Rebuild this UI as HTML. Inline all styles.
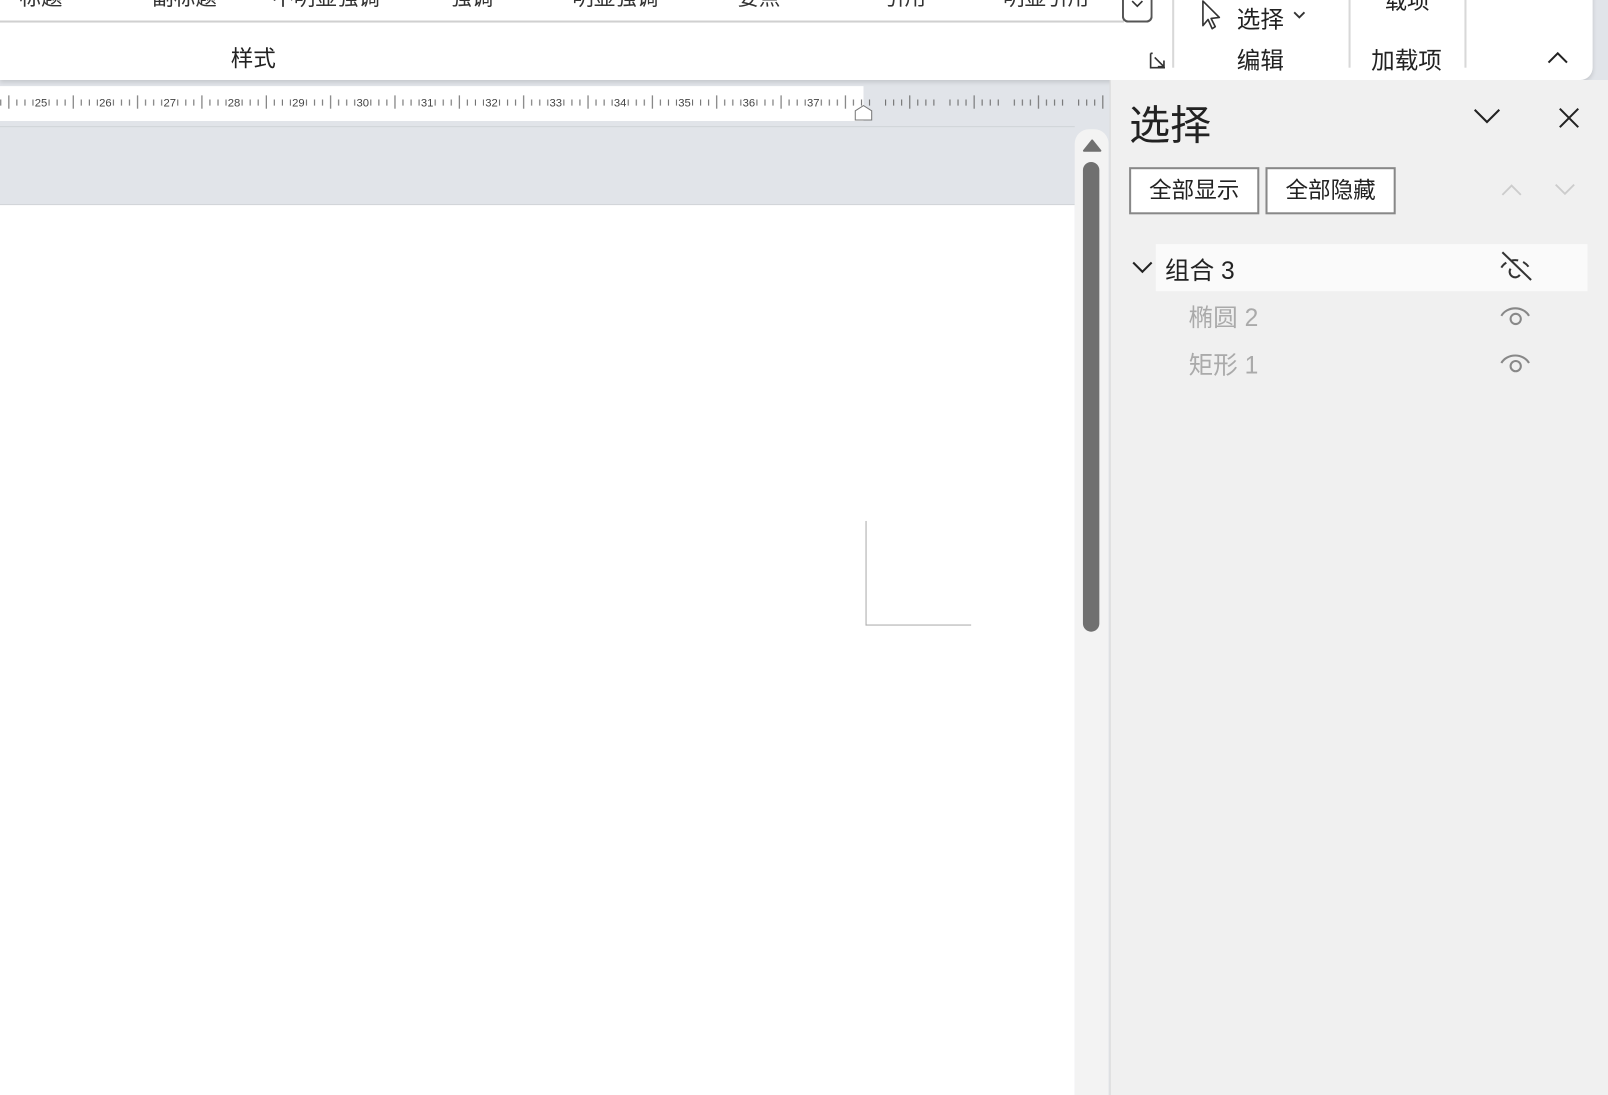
<!DOCTYPE html>
<html><head><meta charset="utf-8">
<style>
*{margin:0;padding:0;box-sizing:border-box}
html,body{width:1608px;height:1068px;overflow:hidden;background:#e1e4e9}
#wrap{position:absolute;left:0;top:0;width:1568px;height:1042px;transform:scale(1.02551);transform-origin:0 0;font-family:"Liberation Sans","Noto Sans CJK SC",sans-serif;color:#222}
.abs{position:absolute}
#ribbon{left:0;top:-10px;width:1553px;height:88px;background:#fff;border-bottom-right-radius:12px;box-shadow:0 2px 4px rgba(0,0,0,.12)}
.gl{position:absolute;font-size:21px;color:#333;transform:translateX(-50%);white-space:nowrap}
#panel{left:1082px;top:78px;width:500px;height:990px;background:#f0f0f0;border-left:1px solid #d8d8d8}
.btn{position:absolute;top:85px;height:46px;border:2px solid #888;background:#fff;font-size:22px;line-height:42px;text-align:center}
</style></head><body><div id="wrap">
<div id="ribbon" class="abs">
  <div class="gl" style="left:40px;top:-8px">标题</div>
  <div class="gl" style="left:180px;top:-8px">副标题</div>
  <div class="gl" style="left:318px;top:-8px">不明显强调</div>
  <div class="gl" style="left:460px;top:-8px">强调</div>
  <div class="gl" style="left:600px;top:-8px">明显强调</div>
  <div class="gl" style="left:740px;top:-8px">要点</div>
  <div class="gl" style="left:882px;top:-8px">引用</div>
  <div class="gl" style="left:1020px;top:-8px">明显引用</div>
  <div class="abs" style="left:0;top:30px;width:1096px;height:2px;background:#d0d0d0"></div>
  <div class="abs" style="left:1094px;top:0;width:30px;height:32px;border:2px solid #555;border-top:none;border-radius:0 0 6px 6px;background:#fff"></div>
  <svg class="abs" style="left:1101px;top:8px" width="16" height="12"><path d="M3 3 L8 8 L13 3" fill="none" stroke="#333" stroke-width="1.6"/></svg>
  <div class="abs" style="left:225px;top:50px;font-size:22px">样式</div>
  <svg class="abs" style="left:1120px;top:60px" width="20" height="20"><path d="M2 2 H4 M2 2 V16 H16 M6 6 L15 15 M15 9 V15 H9" fill="none" stroke="#333" stroke-width="1.6"/></svg>
  <div class="abs" style="left:1143px;top:0;width:2px;height:76px;background:#d8d8d8"></div>
  <div class="abs" style="left:1315px;top:0;width:2px;height:76px;background:#d8d8d8"></div>
  <div class="abs" style="left:1428px;top:0;width:2px;height:76px;background:#d8d8d8"></div>
  <svg class="abs" style="left:1168px;top:8px" width="28" height="34"><path d="M5 3 L5 27 L10 21 L14 30 L17 28 L13 20 L21 19 Z" fill="#fff" stroke="#333" stroke-width="1.6" stroke-linejoin="round"/></svg>
  <div class="abs" style="left:1206px;top:10px;font-size:23px">选择</div>
  <svg class="abs" style="left:1260px;top:20px" width="14" height="10"><path d="M2 2 L7 7 L12 2" fill="none" stroke="#333" stroke-width="1.8"/></svg>
  <div class="abs" style="left:1350px;top:-6px;font-size:22px">载项</div>
  <div class="abs" style="left:1206px;top:50px;font-size:23px">编辑</div>
  <div class="abs" style="left:1337px;top:50px;font-size:23px">加载项</div>
  <svg class="abs" style="left:1507px;top:59px" width="24" height="16"><path d="M3 12 L12 3 L21 12" fill="none" stroke="#222" stroke-width="2"/></svg>
</div>
<div class="abs" style="left:0;top:84px;width:842px;height:34px;background:#fff"></div>
<svg class="abs" style="left:0;top:84px" width="1082" height="40">
<defs><pattern id="tk" x="40" y="0" width="62.75" height="40" patternUnits="userSpaceOnUse">
<g stroke="#666" stroke-width="1">
<line x1="7.84" y1="13" x2="7.84" y2="19"/><line x1="15.7" y1="13" x2="15.7" y2="19"/><line x1="23.5" y1="13" x2="23.5" y2="19"/>
<line x1="31.4" y1="9" x2="31.4" y2="22"/>
<line x1="39.2" y1="13" x2="39.2" y2="19"/><line x1="47.1" y1="13" x2="47.1" y2="19"/><line x1="54.9" y1="13" x2="54.9" y2="19"/>
</g></pattern></defs>
<rect x="0" y="0" width="1082" height="40" fill="url(#tk)"/>
<g font-size="11" fill="#444" text-anchor="middle" font-family="Liberation Sans">
<text x="40" y="20">25</text><text x="102.75" y="20">26</text><text x="165.5" y="20">27</text><text x="228.25" y="20">28</text><text x="291" y="20">29</text><text x="353.75" y="20">30</text><text x="416.5" y="20">31</text><text x="479.25" y="20">32</text><text x="542" y="20">33</text><text x="604.75" y="20">34</text><text x="667.5" y="20">35</text><text x="730.25" y="20">36</text><text x="793" y="20">37</text>
</g>
<path d="M834 33 V24 L842 19 L850 24 V33 Z" fill="#fff" stroke="#777" stroke-width="1"/>
</svg>
<div class="abs" style="left:0;top:123px;width:1048px;height:1px;background:#d0d3d8"></div>
<div class="abs" style="left:0;top:199px;width:1048px;height:869px;background:#fff;border-top:1px solid #cfd2d6"></div>
<div class="abs" style="left:844px;top:508px;width:103px;height:102px;border-left:1.5px solid #aaa;border-bottom:1.5px solid #aaa"></div>
<div class="abs" style="left:1048px;top:126px;width:33px;height:942px;background:#f3f3f3;border-radius:14px 14px 0 0"></div>
<svg class="abs" style="left:1055px;top:134px" width="20" height="16"><path d="M2 13 L10 3 L18 13 Z" fill="#707070" stroke="#707070" stroke-linejoin="round" stroke-width="2"/></svg>
<div class="abs" style="left:1056px;top:158px;width:16px;height:458px;background:#707070;border-radius:8px"></div>
<div id="panel" class="abs">
  <div class="abs" style="left:18px;top:12px;font-size:40px;color:#222">选择</div>
  <svg class="abs" style="left:352px;top:26px" width="30" height="20"><path d="M3 3 L15 15 L27 3" fill="none" stroke="#222" stroke-width="2"/></svg>
  <svg class="abs" style="left:435px;top:25px" width="24" height="24"><path d="M3 3 L21 21 M21 3 L3 21" fill="none" stroke="#222" stroke-width="2"/></svg>
  <div class="btn" style="left:18px;width:127px">全部显示</div>
  <div class="btn" style="left:151px;width:127px">全部隐藏</div>
  <svg class="abs" style="left:380px;top:100px" width="22" height="14"><path d="M2 12 L11 3 L20 12" fill="none" stroke="#ccc" stroke-width="1.8"/></svg>
  <svg class="abs" style="left:432px;top:100px" width="22" height="14"><path d="M2 2 L11 11 L20 2" fill="none" stroke="#ccc" stroke-width="1.8"/></svg>
  <div class="abs" style="left:44px;top:160px;width:421px;height:46px;background:#fafafa"></div>
  <svg class="abs" style="left:20px;top:175px" width="22" height="16"><path d="M2 3 L11 12 L20 3" fill="none" stroke="#222" stroke-width="2"/></svg>
  <div class="abs" style="left:53px;top:166px;font-size:24px;color:#222">组合 3</div>
  <svg class="abs" style="left:377px;top:165px" width="36" height="34"><path d="M4 18 A15 13 0 0 1 31 18" fill="none" stroke="#333" stroke-width="2" stroke-dasharray="7 5"/><path d="M13 19 A5 5 0 0 0 22 25" fill="none" stroke="#333" stroke-width="2"/><path d="M5 3 L33 30" stroke="#333" stroke-width="2"/></svg>
  <div class="abs" style="left:76px;top:212px;font-size:24px;color:#aaa">椭圆 2</div>
  <svg class="abs" style="left:377px;top:212px" width="36" height="30"><path d="M4 18 A15 13 0 0 1 31 18" fill="none" stroke="#888" stroke-width="2"/><circle cx="18" cy="21" r="5" fill="none" stroke="#888" stroke-width="2"/></svg>
  <div class="abs" style="left:76px;top:258px;font-size:24px;color:#aaa">矩形 1</div>
  <svg class="abs" style="left:377px;top:258px" width="36" height="30"><path d="M4 18 A15 13 0 0 1 31 18" fill="none" stroke="#888" stroke-width="2"/><circle cx="18" cy="21" r="5" fill="none" stroke="#888" stroke-width="2"/></svg>
</div>
</div></body></html>
